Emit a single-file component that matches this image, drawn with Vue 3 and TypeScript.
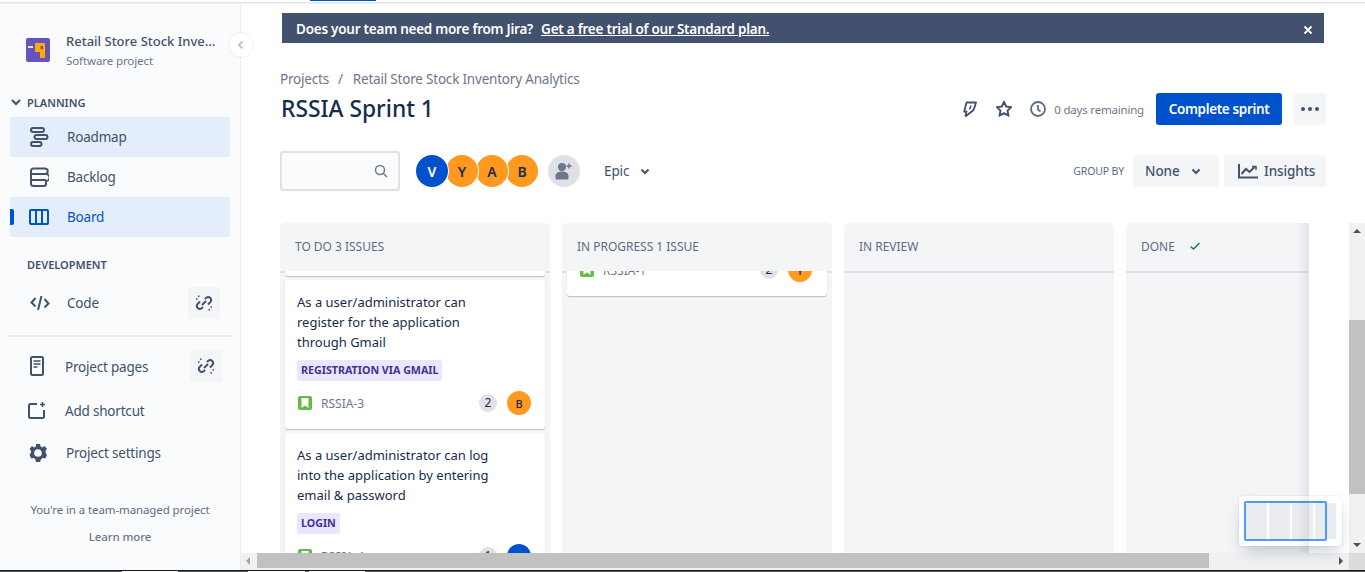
<script setup lang="ts">
interface NavItem { label: string; icon: string; active?: boolean; current?: boolean }
const planning: NavItem[] = [
  { label: 'Roadmap', icon: 'roadmap', active: true },
  { label: 'Backlog', icon: 'backlog' },
  { label: 'Board', icon: 'board', active: true, current: true },
]
const avatars = [
  { l: 'V', c: 'blue' },
  { l: 'Y', c: 'orange' },
  { l: 'A', c: 'orange' },
  { l: 'B', c: 'orange' },
]
</script>

<template>
  <div class="page">
    <div class="topline"><span class="topmark"></span></div>
    <div class="shell">
      <aside class="side">
        <div class="proj">
          <svg class="proj-ico" width="24" height="24" viewBox="0 0 24 24">
            <rect width="24" height="24" rx="2" fill="#6554C0" />
            <rect x="2" y="8" width="5" height="2" fill="#DFE1E6" />
            <path d="M9 5h10v15h-5v-6H9z" fill="#FFAB00" />
            <rect x="14.500" y="8" width="2.500" height="3" fill="#7A5A00" />
          </svg>
          <div class="proj-txt">
            <div class="proj-name">Retail Store Stock Inventory Analytics</div>
            <div class="proj-sub">Software project</div>
          </div>
        </div>
        <div class="sec-head">
          <svg width="12" height="12" viewBox="0 0 12 12"><path d="M2 4l4 4 4-4" fill="none" stroke="#42526E" stroke-width="2" /></svg>
          <span>PLANNING</span>
        </div>
        <div class="nav-list">
          <div v-for="n in planning" :key="n.label" class="nav" :class="{ active: n.active, current: n.current }">
            <svg v-if="n.icon === 'roadmap'" class="nav-ico" width="20" height="20" viewBox="0 0 20 20" fill="none" stroke="#42526E" stroke-width="2">
              <rect x="2" y="1" width="13" height="4" rx="2" /><rect x="5.500" y="8" width="13" height="4" rx="2" /><rect x="2" y="15" width="10.500" height="4" rx="2" />
            </svg>
            <svg v-else-if="n.icon === 'backlog'" class="nav-ico" width="20" height="20" viewBox="0 0 20 20" fill="none" stroke="#42526E" stroke-width="2">
              <path d="M4 1.500h12a2.500 2.500 0 0 1 0 5.500H4" /><path d="M4 1.500A2.500 2.500 0 0 0 2 4v12.500A2.500 2.500 0 0 0 4.500 19H15a2 2 0 0 0 2-2v-3a2 2 0 0 0 0-7" /><path d="M2 7h15M2 13h15" />
            </svg>
            <svg v-else class="nav-ico" width="20" height="20" viewBox="0 0 20 20" fill="none" stroke="#0052CC" stroke-width="2">
              <rect x="1" y="3" width="18" height="14" rx="1" /><path d="M7 3v14M13 3v14" />
            </svg>
            <span>{{ n.label }}</span>
          </div>
        </div>
        <div class="sec-head dev"><span>DEVELOPMENT</span></div>
        <div class="row code">
          <svg class="nav-ico" width="20" height="20" viewBox="0 0 20 20" fill="none" stroke="#42526E" stroke-width="2">
            <path d="M5.500 5L1.500 9.500l4 4M14.500 6l4 4.500-4 4M11.500 3L8 17" />
          </svg>
          <span>Code</span>
          <button class="unlink">
            <svg width="18" height="18" viewBox="0 0 18 18" fill="none" stroke="#42526E" stroke-width="2">
              <path d="M10 5l1.300-1.300a3 3 0 0 1 4.200 4.200L13 10.500M8 13l-1.300 1.300a3 3 0 0 1-4.200-4.200L5 7.500M7 11l4-4" />
              <path d="M3.500 1.500l.6 1.500M1 5h1.500M14.500 16.500l-.6-1.500M17 13h-1.500" stroke-width="1.500" />
            </svg>
          </button>
        </div>
        <hr class="divider" />
        <div class="row pages">
          <svg class="nav-ico" width="14" height="20" viewBox="0 0 14 20" fill="none" stroke="#42526E" stroke-width="2">
            <rect x="1" y="1" width="12" height="18" rx="1.500" /><path d="M3.500 5h7M3.500 8h7M3.500 11h4" stroke-width="1.500" />
          </svg>
          <span>Project pages</span>
          <button class="unlink">
            <svg width="18" height="18" viewBox="0 0 18 18" fill="none" stroke="#42526E" stroke-width="2">
              <path d="M10 5l1.300-1.300a3 3 0 0 1 4.200 4.200L13 10.500M8 13l-1.300 1.300a3 3 0 0 1-4.200-4.200L5 7.500M7 11l4-4" />
              <path d="M3.500 1.500l.6 1.500M1 5h1.500M14.500 16.500l-.6-1.500M17 13h-1.500" stroke-width="1.500" />
            </svg>
          </button>
        </div>
        <div class="row shortcut">
          <svg class="nav-ico" width="18" height="18" viewBox="0 0 18 18" fill="none" stroke="#42526E" stroke-width="2">
            <path d="M9 2H2.500A1.500 1.500 0 0 0 1 3.500v11A1.500 1.500 0 0 0 2.500 16h12a1.500 1.500 0 0 0 1.500-1.500V8" />
            <path d="M14.500 0v5M12 2.500h5" stroke-width="1.600" />
          </svg>
          <span>Add shortcut</span>
        </div>
        <div class="row settings">
          <svg class="nav-ico" width="18" height="18" viewBox="0 0 18 18">
            <path fill="#42526E" fill-rule="evenodd" d="M7 0h4l.6 2.600 1.700.8L15.600 2l2.400 3-1.600 2.100.3 1.900 1.300 2-1.800 3.400-2.600-.4-1.500 1.200L11 18H7l-.6-2.800-1.500-1.200-2.600.4L.5 11 1.800 9l.3-1.900L.5 5l2.400-3 2.300 1.400 1.700-.8zM9 5.200a3.800 3.800 0 1 0 0 7.600 3.800 3.800 0 0 0 0-7.600z" />
          </svg>
          <span>Project settings</span>
        </div>
        <div class="foot">
          <div class="foot-a">You're in a team-managed project</div>
          <div class="foot-b">Learn more</div>
        </div>
      </aside>

      <main class="main">
        <button class="collapse" aria-label="Collapse">
          <svg width="10" height="10" viewBox="0 0 10 10"><path d="M6.500 1.500L3 5l3.500 3.500" fill="none" stroke="#C1C7D0" stroke-width="2" /></svg>
        </button>
        <div class="banner">
          <div class="banner-txt"><span>Does your team need more from Jira?</span><u>Get a free trial of our Standard plan.</u></div>
          <svg class="banner-x" width="10" height="10" viewBox="0 0 10 10"><path d="M1.500 1.500l7 7M8.500 1.500l-7 7" stroke="#fff" stroke-width="1.800" /></svg>
        </div>
        <div class="crumbs"><span>Projects</span><span class="slash">/</span><span>Retail Store Stock Inventory Analytics</span></div>
        <div class="title-row">
          <h1>RSSIA Sprint 1</h1>
          <div class="actions">
            <svg class="bolt" width="14" height="16" viewBox="0 0 14 16" fill="none" stroke="#42526E" stroke-width="1.800" stroke-linejoin="round">
              <path d="M3.500 1.500h9.500l-1.500 5-1.500 3L3 15l-.5-.5L3.500 10.500H1.200z" /><path d="M8 4.500L6.500 8.500" stroke-width="1.500" />
            </svg>
            <svg class="star" width="18" height="18" viewBox="0 0 20 20" fill="none" stroke="#42526E" stroke-width="2.200" stroke-linejoin="round">
              <path d="M10 2l2.400 5.200 5.600.7-4.100 3.900 1.100 5.600-5-2.800-5 2.800 1.100-5.600L2 7.900l5.600-.7z" />
            </svg>
            <svg class="clock" width="16" height="16" viewBox="0 0 16 16" fill="none" stroke="#5E6C84" stroke-width="1.800">
              <circle cx="8" cy="8" r="7" /><path d="M8 4v4.500l2.500 2" />
            </svg>
            <span class="remain">0 days remaining</span>
            <button class="primary">Complete sprint</button>
            <button class="more" aria-label="More"><i></i><i></i><i></i></button>
          </div>
        </div>
        <div class="tools">
          <div class="search">
            <svg width="14" height="14" viewBox="0 0 14 14" fill="none" stroke="#6B778C" stroke-width="1.500">
              <circle cx="6" cy="6" r="4.500" /><path d="M9.500 9.500L13 13" />
            </svg>
          </div>
          <div class="avatars">
            <span v-for="(a, i) in avatars" :key="a.l" class="av" :class="a.c" :style="{ zIndex: 4 - i }">{{ a.l }}</span>
          </div>
          <span class="add-user">
            <svg width="20" height="20" viewBox="0 0 20 20" fill="#6B778C">
              <circle cx="8" cy="6" r="4" /><path d="M1.500 15c0-3 2.500-4.500 6.500-4.500s6.500 1.500 6.500 4.500v2a1.500 1.500 0 0 1-1.500 1.500H3A1.500 1.500 0 0 1 1.500 17z" />
              <path d="M15 2.500v5M12.500 5h5" stroke="#6B778C" stroke-width="1.500" />
            </svg>
          </span>
          <span class="epic">Epic
            <svg width="12" height="12" viewBox="0 0 12 12"><path d="M2.500 4.500L6 8l3.500-3.500" fill="none" stroke="#42526E" stroke-width="2" /></svg>
          </span>
          <span class="spacer"></span>
          <span class="groupby">GROUP BY</span>
          <button class="ghost none">None
            <svg width="12" height="12" viewBox="0 0 12 12"><path d="M2.500 4.500L6 8l3.500-3.500" fill="none" stroke="#42526E" stroke-width="2" /></svg>
          </button>
          <button class="ghost insights">
            <svg width="20" height="16" viewBox="0 0 20 16" fill="none" stroke="#42526E" stroke-width="2">
              <path d="M1 1v13.500h19" /><path d="M3.500 11l4.500-5 3.500 3 5-5" /><path d="M14 3.500h4v3.500" stroke-width="1.500" />
            </svg>
            Insights
          </button>
        </div>

        <div class="board-wrap">
          <div class="board">
            <section class="col">
              <header class="col-head">TO DO 3 ISSUES</header>
              <div class="col-body todo">
                <article class="card tail"></article>
                <article class="card">
                  <p>As a user/administrator can register for the application through Gmail</p>
                  <span class="tag">REGISTRATION VIA GMAIL</span>
                  <div class="meta">
                    <span class="story"><svg width="10" height="10" viewBox="0 0 10 10"><path d="M1.500 0h7v10L5 7.500 1.500 10z" fill="#fff" /></svg></span>
                    <span class="key">RSSIA-3</span><span class="count">2</span><span class="mini orange">B</span>
                  </div>
                </article>
                <article class="card">
                  <p>As a user/administrator can log into the application by entering email &amp; password</p>
                  <span class="tag">LOGIN</span>
                  <div class="meta">
                    <span class="story"><svg width="10" height="10" viewBox="0 0 10 10"><path d="M1.500 0h7v10L5 7.500 1.500 10z" fill="#fff" /></svg></span>
                    <span class="key">RSSIA-4</span><span class="count">1</span><span class="mini blue">V</span>
                  </div>
                </article>
              </div>
            </section>
            <section class="col">
              <header class="col-head">IN PROGRESS 1 ISSUE</header>
              <div class="col-body progress">
                <article class="card one">
                  <div class="meta">
                    <span class="story"><svg width="10" height="10" viewBox="0 0 10 10"><path d="M1.500 0h7v10L5 7.500 1.500 10z" fill="#fff" /></svg></span>
                    <span class="key">RSSIA-1</span><span class="count">2</span><span class="mini orange">Y</span>
                  </div>
                </article>
              </div>
            </section>
            <section class="col">
              <header class="col-head">IN REVIEW</header>
              <div class="col-body"></div>
            </section>
            <section class="col">
              <header class="col-head">DONE
                <svg width="12" height="10" viewBox="0 0 12 10"><path d="M1.500 5.500L4.500 8l6-6" fill="none" stroke="#00875A" stroke-width="1.500" /></svg>
              </header>
              <div class="col-body"></div>
            </section>
            <span class="edge"></span>
          </div>
          <div class="vbar">
            <span class="arrow-up"></span>
            <span class="vthumb"></span>
            <span class="arrow-down"></span>
          </div>
        </div>
        <div class="hbar">
          <span class="arrow-left"></span>
          <span class="hthumb"></span>
          <span class="arrow-right"></span>
          <span class="corner"></span>
        </div>

        <div class="minimap">
          <div class="mini-cols"><i></i><i></i><i></i><i></i></div>
          <div class="mini-view"></div>
        </div>
      </main>
    </div>
    <div class="bottomline"></div>
  </div>
</template>

<style>
html, body { margin: 0; padding: 0; overflow: hidden; background: #fff; }
</style>

<style scoped>
.page {
  width: 1365px; height: 572px; display: flex; flex-direction: column; overflow: hidden;
  font-family: "Noto Sans", "Open Sans", sans-serif; color: #172B4D; background: #fff;
}
.topline { height: 2px; background: #fff; border-bottom: 1px solid #E4E5EC; position: relative; flex: none; box-shadow: 0 1px 1px #F0F1F5; }
.topmark { position: absolute; left: 310px; top: 0; width: 66px; height: 1px; background: #0052CC; }
.shell { flex: 1; display: flex; min-height: 0; }
.bottomline {
  height: 2px; flex: none; box-sizing: border-box; border-top: 1px solid #16181c;
  background: linear-gradient(to right, #555a60 0, #555a60 122px, #fff 122px, #fff 178px, #555a60 178px, #555a60 248px, #fff 248px, #fff 305px, #555a60 305px, #555a60 309px, #fff 309px, #fff 365px, #555a60 365px);
}

.side { width: 241px; flex: none; background: #FAFBFC; border-right: 1px solid #EBECF0; box-sizing: border-box; padding: 0 10px; display: flex; flex-direction: column; }
.proj { display: flex; align-items: center; margin: 28px 0 0 16px; height: 40px; }
.proj-ico { flex: none; margin: -2px 16px 0 0; }
.proj-txt { width: 153px; min-width: 0; }
.proj-name { font-size: 13px; font-weight: 500; color: #42526E; white-space: nowrap; overflow: hidden; text-overflow: ellipsis; line-height: 20px; }
.proj-sub { font-size: 11.500px; letter-spacing: -.1px; color: #6B778C; line-height: 20px; }
.sec-head { display: flex; align-items: center; gap: 5px; height: 14px; margin: 24px 0 0 0; font-size: 11px; font-weight: 600; color: #42526E; }
.sec-head.dev { margin: 20px 0 0 17px; }
.nav-list { margin-top: 8px; }
.nav { height: 40px; display: flex; align-items: center; border-radius: 3px; font-size: 13.500px; letter-spacing: -.2px; color: #42526E; position: relative; padding-left: 19px; box-sizing: border-box; }
.nav.active { background: #E4EEFB; }
.nav.current { color: #0052CC; }
.nav.current::before { content: ""; position: absolute; left: 0; top: 12px; width: 4px; height: 16px; background: #0052CC; border-radius: 0 2px 2px 0; }
.nav-ico { flex: none; }
.nav span { margin-left: 18px; }
.row { display: flex; align-items: center; font-size: 13.500px; letter-spacing: -.2px; color: #42526E; }
.row.code { height: 32px; margin: 16px 0 0 20px; width: 190px; }
.row.code > span { margin-left: 17px; flex: 1; }
.unlink { width: 32px; height: 32px; border: 0; padding: 0; background: #F4F5F7; border-radius: 3px; display: flex; align-items: center; justify-content: center; flex: none; }
.divider { border: 0; height: 2px; background: #EBECF0; margin: 16px 0 0 -2px; width: 224px; flex: none; }
.row.pages { height: 32px; margin: 13px 0 0 20px; width: 192px; }
.row.pages > span { margin: 2px 0 0 21px; flex: 1; }
.row.shortcut { height: 18px; margin: 20px 0 0 18px; }
.row.shortcut > span { margin-left: 19px; }
.row.settings { height: 18px; margin: 24px 0 0 19px; }
.row.settings > span { margin-left: 19px; }
.foot { margin-top: auto; margin-bottom: 24px; text-align: center; font-size: 11.500px; letter-spacing: -.1px; color: #5E6C84; margin-left: -10px; width: 240px; }
.foot-a { line-height: 18px; }
.foot-b { line-height: 18px; margin-top: 9px; color: #6B778C; font-weight: 500; }

.main { flex: 1; min-width: 0; position: relative; display: flex; flex-direction: column; }
.collapse { position: absolute; left: -12px; top: 30px; width: 24px; height: 24px; border-radius: 50%; border: 0; padding: 0; background: #fff; box-shadow: 0 0 0 1px rgba(9,30,66,.06); display: flex; align-items: center; justify-content: center; }
.banner { margin: 10px 0 0 41px; width: 1042px; height: 30px; background: #42526E; color: #fff; display: flex; align-items: center; justify-content: space-between; box-sizing: border-box; padding: 0 11px 0 14px; flex: none; }
.banner-txt { font-size: 13.500px; letter-spacing: -.24px; font-weight: 600; display: flex; gap: 8px; margin-top: 2px; }
.banner-x { margin-top: 3px; }
.crumbs { margin: 26px 0 0 39px; font-size: 13.500px; letter-spacing: -.2px; line-height: 20px; color: #6B778C; display: flex; flex: none; }
.slash { margin: 0 10px 0 9px; }
.title-row { display: flex; align-items: center; height: 32px; margin: 4px 39px 0 39px; flex: none; justify-content: space-between; }
h1 { margin: 0 0 0 1px; font-size: 22.800px; font-weight: 500; color: #172B4D; line-height: 32px; }
.actions { display: flex; align-items: center; }
.bolt { margin-right: 18px; }
.star { margin-right: 17px; }
.clock { margin-right: 8px; }
.remain { font-size: 11.500px; letter-spacing: -.2px; color: #6B778C; margin-right: 12px; }
.primary { width: 126px; height: 32px; border: 0; border-radius: 3px; background: #0052CC; color: #fff; font: 600 13.500px "Noto Sans", sans-serif; letter-spacing: -.35px; padding: 0; }
.more { width: 32px; height: 32px; margin-left: 12px; border: 0; border-radius: 3px; background: #F4F5F7; display: flex; align-items: center; justify-content: center; gap: 3px; padding: 0; }
.more i { width: 4px; height: 4px; border-radius: 50%; background: #42526E; }

.tools { display: flex; align-items: center; height: 40px; margin: 26px 39px 0 39px; flex: none; }
.search { width: 120px; height: 40px; box-sizing: border-box; border: 2px solid #DFE1E6; border-radius: 3px; background: #FAFBFC; display: flex; align-items: center; justify-content: flex-end; padding-right: 10px; }
.avatars { display: flex; margin-left: 16px; }
.av { position: relative; width: 32px; height: 32px; border-radius: 50%; display: flex; align-items: center; justify-content: center; font-size: 14px; font-weight: 600; box-shadow: 0 0 0 1px #fff; }
.av + .av { margin-left: -2px; }
.av.blue { background: #0052CC; color: #fff; }
.av.orange { background: #FF991F; color: #172B4D; }
.add-user { width: 32px; height: 32px; margin-left: 10px; border-radius: 50%; background: #DFE1E6; display: flex; align-items: center; justify-content: center; }
.epic { margin-left: 24px; font-size: 13.500px; letter-spacing: -.1px; color: #42526E; display: flex; align-items: center; gap: 10px; }
.spacer { flex: 1; }
.groupby { font-size: 10.500px; letter-spacing: -.15px; color: #5E6C84; margin-right: 9px; }
.ghost { height: 32px; border: 0; border-radius: 3px; background: #F4F5F7; color: #42526E; font: 500 13.500px "Noto Sans", sans-serif; letter-spacing: -.1px; display: flex; align-items: center; padding: 0; }
.none { width: 86px; padding-left: 12px; gap: 10px; }
.insights { width: 102px; margin-left: 5px; padding-left: 14px; gap: 6px; }

.board-wrap { display: flex; height: 330px; margin-top: 32px; flex: none; }
.board { width: 1029px; margin-left: 39px; display: flex; gap: 12px; overflow: hidden; position: relative; }
.edge { position: absolute; right: 0; top: 0; bottom: 0; width: 12px; z-index: 3; background: linear-gradient(to right, rgba(9,30,66,0), rgba(9,30,66,.08)); }
.col { width: 270px; flex: none; background: #F4F5F7; border-radius: 6px 6px 0 0; display: flex; flex-direction: column; }
.col-head { height: 48px; flex: none; box-sizing: border-box; padding: 0 15px 2px; display: flex; align-items: center; font-size: 12px; letter-spacing: -.02px; color: #5E6C84; gap: 14px; background: #F4F5F7; position: relative; z-index: 2; border-radius: 6px 6px 0 0; }
.col-body { flex: 1; overflow: hidden; padding: 0 5px; display: flex; flex-direction: column; gap: 4px; min-height: 0; background: linear-gradient(#DFE1E6, #DFE1E6) top / 100% 2px no-repeat; }
.card { background: #fff; border-radius: 3px; box-shadow: 0 1px 1px rgba(9,30,66,.25); padding: 12px 14px 14px 12px; box-sizing: border-box; flex: none; }
.card.tail { height: 20px; margin-top: -15px; padding: 0; }
.card p { margin: 0; font-size: 13px; line-height: 20px; color: #172B4D; width: 205px; }
.tag { display: inline-block; margin-top: 8px; height: 21px; line-height: 21px; padding: 0 4px; border-radius: 3px; background: #EAE6FF; color: #403294; font-size: 10.700px; font-weight: 700; vertical-align: top; }
.meta { display: flex; align-items: center; height: 24px; margin-top: 10px; }
.story { width: 14px; height: 14px; border-radius: 2px; background: #65BA43; display: flex; align-items: center; justify-content: center; margin-left: 1px; }
.key { margin-left: 9px; font-size: 12px; color: #6B778C; flex: 1; }
.count { min-width: 18px; height: 18px; line-height: 18px; text-align: center; border-radius: 9px; background: #DFE1E6; font-size: 12px; color: #172B4D; margin-right: 10px; }
.mini { width: 24px; height: 24px; border-radius: 50%; display: flex; align-items: center; justify-content: center; font-size: 11px; font-weight: 500; }
.mini.orange { background: #FF991F; color: #172B4D; }
.mini.blue { background: #0052CC; color: #fff; }
.card.one { height: 40px; margin-top: -15px; padding: 2px 15px 14px 12px; }
.card.one .meta { margin-top: 0; }

.vbar { width: 16px; margin-left: 40px; background: #F1F1F1; position: relative; flex: none; }
.vthumb { position: absolute; left: 0; top: 97px; width: 16px; height: 174px; background: #C1C1C1; }
.arrow-up { position: absolute; left: 4px; top: 6px; border: 4px solid transparent; border-top: 0; border-bottom: 4px solid #505050; }
.arrow-down { position: absolute; left: 4px; bottom: 6px; border: 4px solid transparent; border-bottom: 0; border-top: 4px solid #505050; }
.hbar { height: 17px; background: #F1F1F1; position: relative; flex: none; }
.hthumb { position: absolute; left: 16px; top: 0; width: 952px; height: 15px; background: #C1C1C1; }
.arrow-left { position: absolute; left: 5px; top: 4px; border: 4px solid transparent; border-left: 0; border-right: 4px solid #A3A3A3; }
.arrow-right { position: absolute; right: 22px; top: 4px; border: 4px solid transparent; border-right: 0; border-left: 4px solid #505050; }
.corner { position: absolute; right: 0; top: 0; width: 16px; height: 17px; background: #DCDCDC; }

.minimap { position: absolute; left: 998px; top: 493px; width: 103px; height: 50px; background: #fff; border-radius: 3px; box-shadow: 0 8px 16px -4px rgba(9,30,66,.25), 0 0 1px rgba(9,30,66,.31); }
.mini-cols { display: flex; gap: 2px; position: absolute; left: 7px; top: 7px; }
.mini-cols i { width: 21px; height: 36px; background: #EBECF0; border-radius: 2px; }
.mini-view { position: absolute; left: 5px; top: 5px; width: 83px; height: 40px; box-sizing: border-box; border: 2px solid #4C9AFF; border-radius: 2px; }
</style>
